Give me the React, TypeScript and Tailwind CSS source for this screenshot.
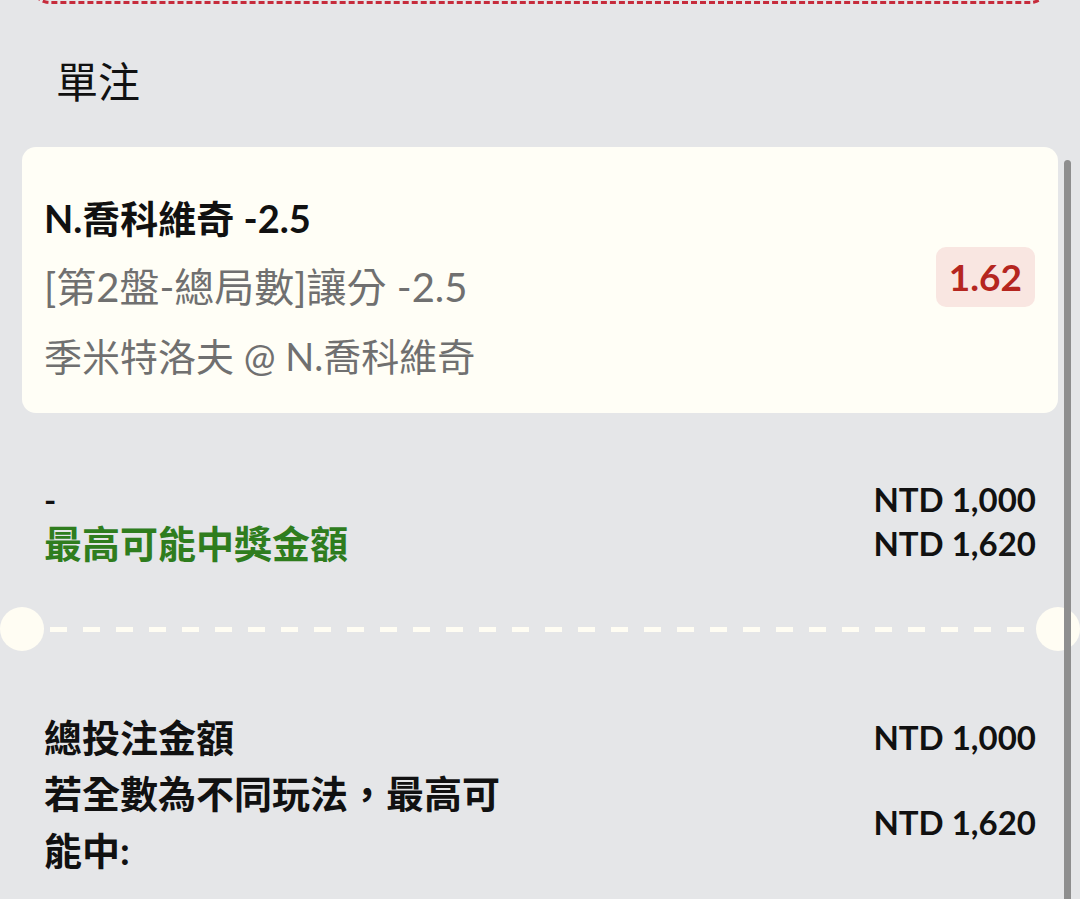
const font = { fontFamily: "Lato, 'Noto Sans CJK TC', 'Noto Sans', sans-serif" };

function Divider() {
  return (
    <div className="flex items-center gap-[6px]">
      <div className="w-[44px] h-[44px] rounded-full bg-[#fffdf3] shrink-0" />
      <div className="flex-1 h-[5px] bg-[repeating-linear-gradient(to_right,#fffdf3_0_17px,transparent_17px_33px)]" />
      <div className="w-[44px] h-[44px] rounded-full bg-[#fffdf3] shrink-0" />
    </div>
  );
}

export default function App() {
  return (
    <div className="relative min-h-screen overflow-hidden bg-[#e5e6e8] text-[#111]" style={font}>
      {/* bottom edge of the box above */}
      <div className="mx-[30px] -mt-[42px] h-[46px] rounded-[20px] border-[3px] border-dashed border-[#c62b3b]" />

      <div className="mx-[22px]">
        <h2 className="mt-[50px] px-[34px] text-[42px] leading-[56px] font-normal">單注</h2>

        {/* selection card */}
        <div className="mt-[37px] flex items-start justify-between rounded-[14px] bg-[#fffef6] pl-[22px] pr-[23px] pt-[45px] pb-[31px]">
          <div className="flex flex-col gap-[17px] leading-[52px]">
            <div className="text-[38px] font-bold text-[#111]">N.喬科維奇 -2.5</div>
            <div className="text-[40px] text-[#707070]">[第2盤-總局數]讓分 -2.5</div>
            <div className="text-[38px] text-[#707070]">季米特洛夫 @ N.喬科維奇</div>
          </div>
          <div className="mt-[55px] rounded-[10px] bg-[#f9e6e1] px-[13px] h-[60px] flex items-center text-[37px] font-bold text-[#b5261f]">
            1.62
          </div>
        </div>

        {/* stake / potential win */}
        <div className="mt-[64px] px-[22px] flex flex-col">
          <div className="flex justify-between items-center leading-[44px]">
            <span className="text-[33px] font-bold">-</span>
            <span className="text-[33px] font-bold">NTD 1,000</span>
          </div>
          <div className="flex justify-between items-center leading-[44px]">
            <span className="text-[38px] font-bold text-[#2f7d1e]">最高可能中獎金額</span>
            <span className="text-[33px] font-bold">NTD 1,620</span>
          </div>
        </div>
      </div>

      <div className="mt-[42px]">
        <Divider />
      </div>

      {/* totals */}
      <div className="mx-[22px] mt-[58px] px-[22px] flex flex-col">
        <div className="flex justify-between items-center leading-[56px]">
          <span className="text-[38px] font-bold">總投注金額</span>
          <span className="text-[33px] font-bold">NTD 1,000</span>
        </div>
        <div className="flex justify-between items-center leading-[57px]">
          <span className="w-[470px] text-[38px] font-bold">若全數為不同玩法，最高可能中:</span>
          <span className="text-[33px] font-bold">NTD 1,620</span>
        </div>
      </div>

      {/* scroll indicator */}
      <div className="absolute right-[9px] top-[160px] bottom-0 w-[7px] rounded-t-full bg-[#8e8e8e]" />
    </div>
  );
}
